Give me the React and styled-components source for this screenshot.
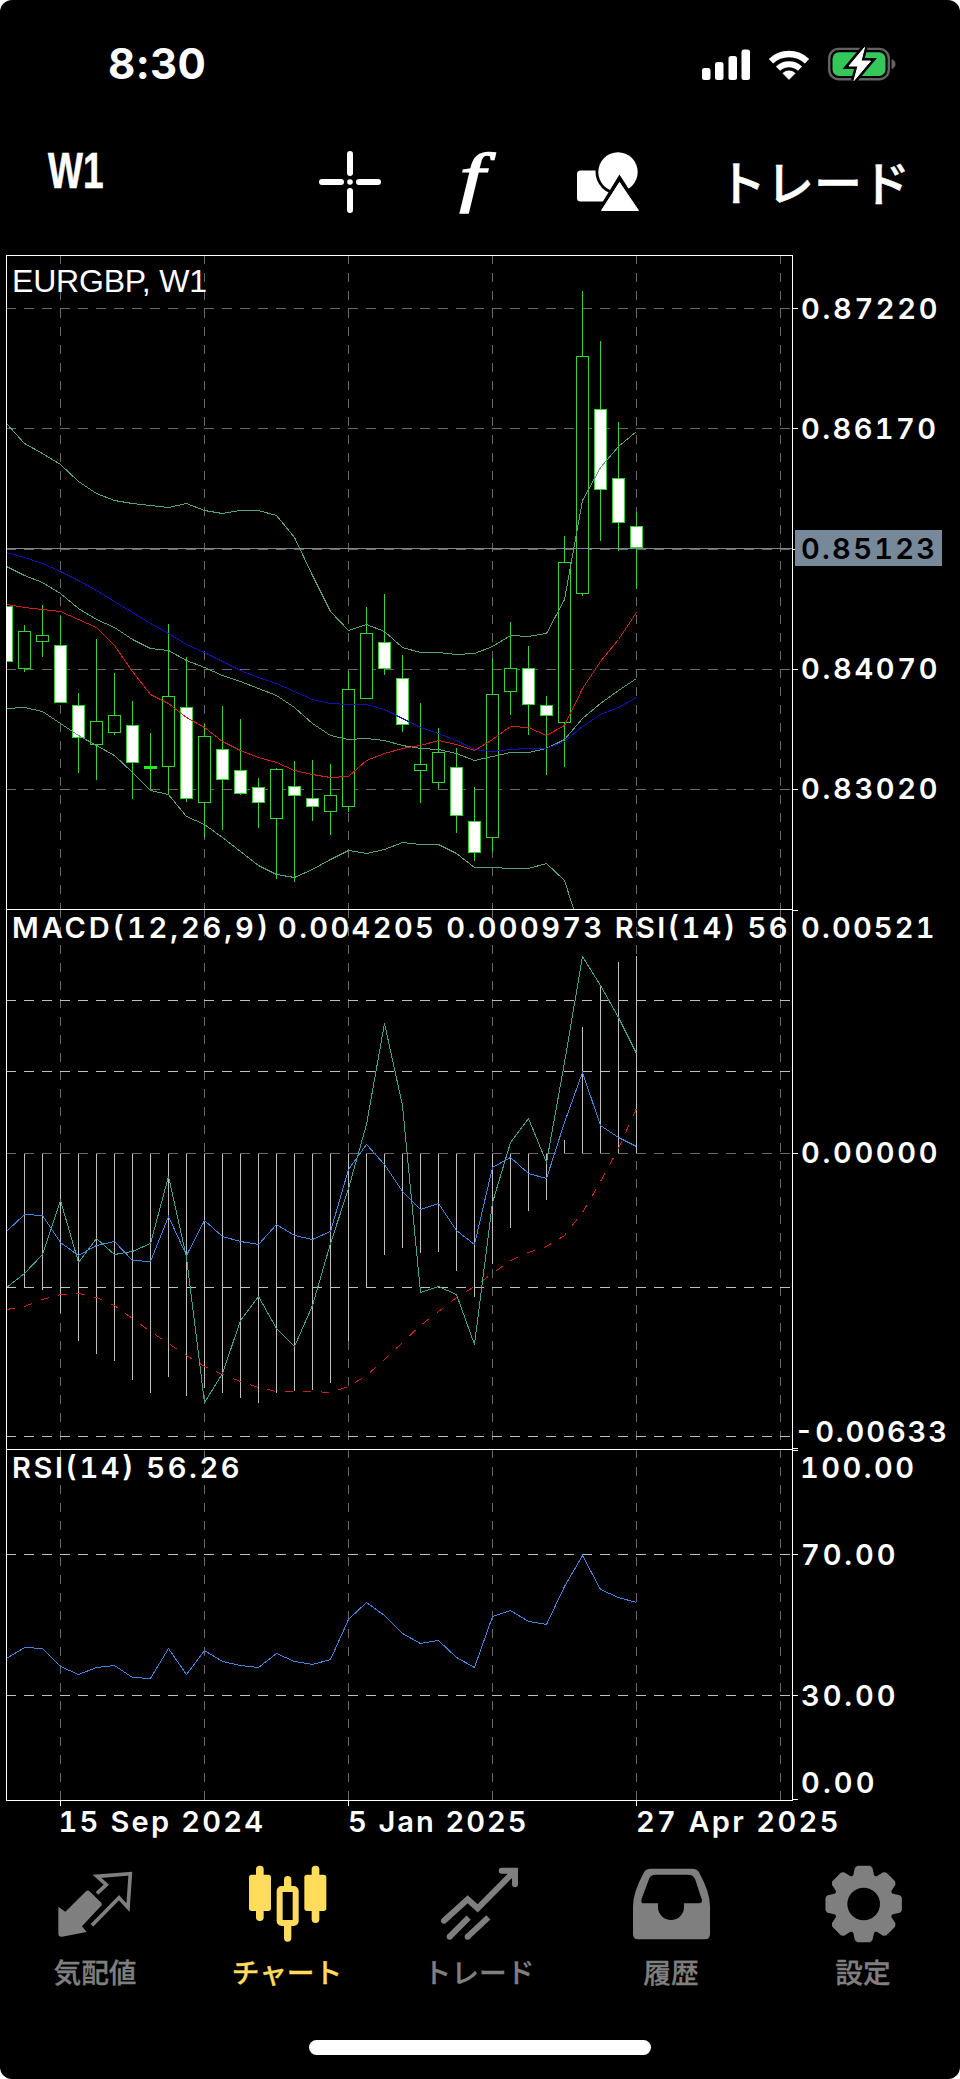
// Components==============
import React from "react";
import styled, { createGlobalStyle } from "styled-components";
// =========================

const GlobalStyle = createGlobalStyle`
   body {
      margin: 0;
      background: #fff;
   }
`;

const Screen = styled.main`
   display: flex;
   flex-direction: column;
   width: 960px;
   height: 2079px;
   overflow: hidden;
   border-radius: 12px;
   background: #000;
   color: #fff;
   font-family: Inter, "Noto Sans CJK JP", sans-serif;
`;

const StatusBar = styled.header`
   display: flex;
   align-items: center;
   justify-content: space-between;
   box-sizing: border-box;
   height: 110px;
   padding: 18px 64px 0 108px;
`;

const Clock = styled.span`
   font-size: 42px;
   font-weight: 700;
   line-height: 50px;
   letter-spacing: 0.3px;
`;

const StatusIcons = styled.div`
   display: flex;
   align-items: center;
   gap: 18px;

   svg {
      display: block;
   }
`;

const Toolbar = styled.nav`
   display: flex;
   box-sizing: border-box;
   height: 145px;
   padding: 35px 0 0 48px;
`;

const Timeframe = styled.div`
   width: 266px;
   font-family: "Liberation Sans", sans-serif;
   font-size: 50px;
   font-weight: 700;
   line-height: 52px;
   -webkit-text-stroke: 0.6px #fff;

   span {
      display: inline-block;
      transform: scaleX(0.74);
      transform-origin: left;
   }
`;

const Tool = styled.div`
   display: flex;
   align-items: center;
   justify-content: center;
   width: ${props => props.$width}px;
   height: 74px;
`;

const FunctionSign = styled.span`
   padding: 0 10px 10px 0;
   font-family: "Liberation Serif", serif;
   font-size: 65px;
   font-style: italic;
   line-height: 74px;
   transform: scaleX(1.4);
   -webkit-text-stroke: 1.4px #fff;
`;

const TradeLink = styled.div`
   padding: 0 0 0 74px;
   font-family: "Noto Sans CJK JP", sans-serif;
   font-size: 48px;
   font-weight: 500;
   line-height: 71px;
   white-space: nowrap;
   -webkit-text-stroke: 0.6px #fff;
`;

const Chart = styled.section`
   display: flex;
   flex-direction: column;

   svg {
      display: block;
   }
`;

const Label = styled.text`
   fill: ${props => props.$color || "#fff"};
   font-family: Inter, sans-serif;
   font-size: 29px;
   font-variant-numeric: tabular-nums;
   font-weight: 560;
   white-space: pre;
`;

const SymbolLabel = styled(Label)`
   font-family: "Liberation Sans", sans-serif;
   font-size: 32px;
   font-weight: 400;
`;

const TabBar = styled.nav`
   display: flex;
   height: 177px;
   padding-top: 19px;
`;

const Tab = styled.div`
   display: flex;
   flex: 1;
   flex-direction: column;
   align-items: center;
   color: ${props => (props.$active ? "#ffdc5c" : "#7f7f7f")};

   svg {
      display: block;
      margin-bottom: 8px;
   }
`;

const TabLabel = styled.span`
   padding-right: 2px;
   font-family: "Noto Sans CJK JP", sans-serif;
   font-size: 27.7px;
   font-weight: 500;
   line-height: 40px;
   white-space: nowrap;
   -webkit-text-stroke: 0.3px currentColor;
`;

const HomeIndicator = styled.div`
   width: 342px;
   height: 15px;
   margin: 0 auto;
   border-radius: 8px;
   background: #fff;
`;

// Chart data ==============
const STEP = 18;
const LEFT = 6;
const GRID_X = [60, 204, 348, 492, 636, 780];

// high, body top, body bottom, low, filled
const candles = [
   [606, 606, 661, 661, 1],
   [625, 631, 668, 672, 0],
   [605, 635, 641, 657, 0],
   [616, 645, 702, 702, 1],
   [693, 705, 737, 773, 1],
   [639, 721, 744, 780, 0],
   [673, 715, 732, 735, 0],
   [701, 725, 762, 799, 1],
   [733, 766, 768, 789, 2],
   [624, 696, 766, 795, 0],
   [657, 707, 798, 802, 1],
   [724, 736, 802, 838, 0],
   [706, 749, 779, 830, 1],
   [719, 770, 793, 795, 1],
   [778, 787, 802, 828, 1],
   [768, 769, 818, 879, 0],
   [761, 786, 795, 882, 1],
   [760, 798, 806, 821, 1],
   [764, 795, 811, 835, 0],
   [671, 689, 806, 812, 0],
   [607, 633, 698, 698, 0],
   [594, 642, 668, 675, 1],
   [655, 678, 724, 732, 1],
   [703, 764, 770, 803, 0],
   [728, 752, 782, 789, 0],
   [748, 767, 815, 833, 1],
   [787, 821, 852, 861, 1],
   [658, 694, 837, 852, 0],
   [622, 668, 691, 715, 0],
   [646, 668, 704, 735, 1],
   [696, 705, 715, 775, 1],
   [536, 562, 722, 767, 0],
   [291, 356, 593, 596, 0],
   [341, 409, 489, 541, 1],
   [422, 478, 522, 551, 1],
   [512, 526, 547, 589, 1]
];

const upperBand = [
   423, 443, 453, 464, 481, 493, 500, 503, 505, 507, 503, 510, 513, 510, 510,
   515, 537, 575, 611, 630, 624, 631, 647, 652, 652, 654, 653, 646, 635, 636,
   633, 599, 500, 467, 446, 431
];
const middleBand = [
   566, 575, 582, 593, 608, 619, 627, 639, 648, 650, 660, 667, 675, 681, 688,
   695, 707, 723, 735, 739, 738, 740, 745, 748, 749, 753, 760, 756, 752, 752,
   748, 739, 718, 703, 690, 678
];
const lowerBand = [
   708, 707, 711, 723, 735, 745, 755, 772, 790, 794, 816, 824, 837, 851, 865,
   874, 877, 869, 859, 850, 853, 849, 842, 844, 844, 853, 867, 867, 868, 868,
   863, 880, 936
];
const fastAverage = [
   604, 607, 609, 611, 619, 627, 645, 671, 694, 703, 717, 727, 741, 750, 757,
   762, 770, 774, 777, 776, 760, 753, 748, 745, 740, 744, 750, 739, 726, 727,
   735, 725, 688, 661, 639, 612
];
const slowAverage = [
   552, 557, 563, 571, 580, 590, 601, 612, 623, 633, 644, 652, 661, 670, 677,
   683, 691, 699, 703, 704, 704, 709, 718, 727, 733, 740, 749, 751, 749, 748,
   748, 741, 726, 714, 707, 697
];

const ZERO = 1153;
const histogram = [
   1287, 1287, 1290, 1313, 1341, 1354, 1361, 1380, 1393, 1377, 1396, 1388,
   1393, 1398, 1403, 1393, 1391, 1390, 1383, 1341, 1287, 1255, 1248, 1253,
   1252, 1271, 1297, 1264, 1228, 1211, 1200, 1140, 1027, 985, 962, 956
];
const momentum = [
   1287, 1273, 1254, 1200, 1262, 1238, 1254, 1251, 1243, 1176, 1257, 1402,
   1373, 1320, 1296, 1328, 1346, 1305, 1243, 1188, 1124, 1023, 1105, 1292,
   1286, 1294, 1344, 1202, 1142, 1118, 1162, 1062, 956, 985, 1017, 1053
];
const macdRsi = [
   1231, 1214, 1215, 1242, 1255, 1245, 1241, 1260, 1261, 1216, 1255, 1220,
   1236, 1241, 1244, 1224, 1235, 1239, 1231, 1169, 1144, 1164, 1191, 1209,
   1203, 1230, 1244, 1167, 1157, 1173, 1178, 1122, 1072, 1125, 1137, 1146
];
const signal = [
   1309, 1306, 1299, 1294, 1293, 1297, 1305, 1318, 1331, 1343, 1355, 1366,
   1374, 1381, 1387, 1391, 1391, 1391, 1392, 1386, 1375, 1359, 1342, 1325,
   1311, 1297, 1286, 1273, 1260, 1252, 1246, 1235, 1212, 1181, 1148, 1108
];
const rsi = [
   1658, 1647, 1648, 1666, 1674, 1667, 1665, 1677, 1678, 1648, 1674, 1650,
   1661, 1665, 1667, 1653, 1661, 1664, 1659, 1619, 1602, 1615, 1633, 1643,
   1640, 1657, 1667, 1616, 1610, 1621, 1624, 1586, 1555, 1589, 1597, 1602
];

const barX = i => LEFT + i * STEP + 0.5;

const toPoints = values =>
   values.map((y, i) => `${barX(i)},${y + 0.5}`).join(" ");

function Line({ values, color, dash }) {
   return (
      <polyline
         points={toPoints(values)}
         fill="none"
         stroke={color}
         strokeDasharray={dash}
      />
   );
}

function Pane({ id, top, height, grid, children, ticks, overlay }) {
   const bottom = top + height;
   return (
      <svg
         width="960"
         height={height}
         viewBox={`0 ${top} 960 ${height}`}
         shapeRendering="crispEdges"
      >
         <clipPath id={id}>
            <rect x="7" y={top + 1} width="785" height={height - 1} />
         </clipPath>
         <g clipPath={`url(#${id})`}>
            {GRID_X.map(x => (
               <line
                  key={x}
                  x1={x + 0.5}
                  x2={x + 0.5}
                  y1={top}
                  y2={bottom}
                  stroke="#696969"
                  strokeDasharray="9 9"
               />
            ))}
            {grid.map(([y, color]) => (
               <line
                  key={y}
                  x1={LEFT}
                  x2="791"
                  y1={y + 0.5}
                  y2={y + 0.5}
                  stroke={color}
                  strokeDasharray="9.5 8.5"
               />
            ))}
            {children}
         </g>
         <path
            d={`M792.5 ${bottom}V${top + 0.5}H6.5V${bottom}`}
            fill="none"
            stroke="#fff"
         />
         {ticks.map(y => (
            <line
               key={y}
               x1="793"
               x2="798"
               y1={y + 0.5}
               y2={y + 0.5}
               stroke="#fff"
            />
         ))}
         {overlay}
      </svg>
   );
}

function Candle({ index, high, top, bottom, low, kind }) {
   const x = barX(index);
   if (kind === 2) {
      return (
         <g>
            <line x1={x} x2={x} y1={high} y2={low} stroke="#35d335" />
            <rect x={x - 6.5} y={top} width="13" height="3" fill="#1ff01f" />
         </g>
      );
   }
   return (
      <g stroke="#35d335">
         <line x1={x} x2={x} y1={high} y2={top} />
         <line x1={x} x2={x} y1={bottom} y2={low} />
         <rect
            x={x - 6}
            y={top + 0.5}
            width="12"
            height={bottom - top}
            fill={kind ? "#fff" : "#000"}
         />
      </g>
   );
}

function PricePane() {
   const grid = [308, 428, 549, 669, 789];
   return (
      <Pane
         id="price"
         top={255}
         height={654}
         grid={grid.map(y => [y, "#696969"])}
         ticks={grid}
         overlay={
            <>
               <rect x="795" y="530" width="147" height="36" fill="#778899" />
               <SymbolLabel x="12" y="292" textLength="195">
                  EURGBP, W1
               </SymbolLabel>
               <Label x="801" y="319" textLength="136.5">0.87220</Label>
               <Label x="801" y="439" textLength="135">0.86170</Label>
               <Label x="801" y="559" textLength="134" $color="#000">
                  0.85123
               </Label>
               <Label x="801" y="679" textLength="136.5">0.84070</Label>
               <Label x="801" y="799" textLength="136.5">0.83020</Label>
            </>
         }
      >
         {candles.map(([high, top, bottom, low, kind], i) => (
            <Candle
               key={i}
               index={i}
               high={high}
               top={top}
               bottom={bottom}
               low={low}
               kind={kind}
            />
         ))}
         <line x1="7" x2="792" y1="548.5" y2="548.5" stroke="#778899" />
         <Line values={upperBand} color="#56a07a" />
         <Line values={middleBand} color="#56a07a" />
         <Line values={lowerBand} color="#56a07a" />
         <Line values={slowAverage} color="#1010b4" />
         <Line values={fastAverage} color="#cf2020" />
      </Pane>
   );
}

function MacdPane() {
   return (
      <Pane
         id="macd"
         top={909}
         height={540}
         grid={[
            [1000, "#c0c0c0"],
            [1071, "#c0c0c0"],
            [1153, "#696969"],
            [1287, "#c0c0c0"],
            [1436, "#c0c0c0"]
         ]}
         ticks={[910, 1153, 1448]}
         overlay={
            <>
               <Label x="12" y="938" textLength="256">
                  MACD(12,26,9)
               </Label>
               <Label x="278" y="938" textLength="509.5">
                  0.004205 0.000973 RSI(14) 56
               </Label>
               <Label x="801" y="938" textLength="133.5">0.00521</Label>
               <Label x="801" y="1163" textLength="136.5">0.00000</Label>
               <Label x="794.5" y="1442" textLength="152.5">-0.00633</Label>
            </>
         }
      >
         {histogram.map((y, i) => (
            <line
               key={i}
               x1={barX(i)}
               x2={barX(i)}
               y1={y < ZERO ? ZERO : ZERO + 1}
               y2={y}
               stroke="#c0c0c0"
            />
         ))}
         <Line values={signal} color="#cf2020" dash="8.5 9.5" />
         <Line values={macdRsi} color="#4583dc" />
         <Line values={momentum} color="#3fa295" />
      </Pane>
   );
}

function RsiPane() {
   return (
      <Pane
         id="rsi"
         top={1449}
         height={351}
         grid={[
            [1554, "#c0c0c0"],
            [1695, "#c0c0c0"]
         ]}
         ticks={[1450, 1554, 1695, 1799]}
         overlay={
            <>
               <Label x="12" y="1478" textLength="227.5">RSI(14) 56.26</Label>
               <Label x="800" y="1478" textLength="114">100.00</Label>
               <Label x="801" y="1565" textLength="94.5">70.00</Label>
               <Label x="801" y="1706" textLength="94.5">30.00</Label>
               <Label x="801" y="1793" textLength="73.5">0.00</Label>
            </>
         }
      >
         <Line values={rsi} color="#4583dc" />
      </Pane>
   );
}

function TimeAxis() {
   return (
      <svg
         width="960"
         height="44"
         viewBox="0 1800 960 44"
         shapeRendering="crispEdges"
      >
         <path
            d="M6 1800.5H793M60.5 1800V1806M348.5 1800V1806M636.5 1800V1806"
            stroke="#fff"
         />
         <Label x="58.5" y="1832" textLength="204.5">15 Sep 2024</Label>
         <Label x="348" y="1832" textLength="178.5">5 Jan 2025</Label>
         <Label x="636" y="1832" textLength="202.5">27 Apr 2025</Label>
      </svg>
   );
}

// Status icons ============
function SignalIcon() {
   return (
      <svg width="48" height="31" viewBox="702 48 48 31" fill="#fff">
         <rect x="702" y="67" width="8.5" height="12" rx="2.5" />
         <rect x="715" y="61" width="8.5" height="18" rx="2.5" />
         <rect x="728.5" y="55" width="8.5" height="24" rx="2.5" />
         <rect x="741.5" y="48.5" width="8.5" height="30.5" rx="2.5" />
      </svg>
   );
}

function WifiIcon() {
   return (
      <svg width="42" height="31" viewBox="0 0 42 31" fill="none">
         <path d="M3 12.3A26 26 0 0 1 39 12.3" stroke="#fff" strokeWidth="6.4" />
         <path d="M10 19.6A16 16 0 0 1 32 19.6" stroke="#fff" strokeWidth="6" />
         <path
            d="M21 30.5L14.8 24.3A9 9 0 0 1 27.2 24.3Z"
            fill="#fff"
            stroke="#fff"
            strokeWidth="0.6"
         />
      </svg>
   );
}

function BatteryIcon() {
   const bolt = "M864.5 47L849 65.5H858L854 80L870.5 60.5H861Z";
   return (
      <svg width="68" height="34" viewBox="828 46.5 68 34">
         <rect
            x="829.2"
            y="48.4"
            width="59.6"
            height="30.4"
            rx="9.5"
            fill="none"
            stroke="#626262"
            strokeWidth="2.4"
         />
         <path d="M891.5 58.5Q895.5 60 895.5 63.6T891.5 68.8Z" fill="#626262" />
         <rect x="832.5" y="51.8" width="53" height="23.6" rx="6.5" fill="#34c759" />
         <path d={bolt} fill="#000" stroke="#000" strokeWidth="6" />
         <path
            d={bolt}
            fill="#fff"
            stroke="#fff"
            strokeWidth="1"
            strokeLinejoin="round"
         />
      </svg>
   );
}

// Toolbar icons ===========
function CrosshairIcon() {
   return (
      <svg width="62" height="62" viewBox="0 0 62 62">
         <path
            d="M31 3V22M31 40V59M3 31H22M40 31H59"
            stroke="#fff"
            strokeWidth="6"
            strokeLinecap="round"
         />
         <circle cx="31" cy="31" r="2.8" fill="#fff" />
      </svg>
   );
}

function ShapesIcon() {
   return (
      <svg width="64" height="62" viewBox="576 151 64 62">
         <rect x="577" y="170.5" width="40" height="31" rx="3.5" fill="#fff" />
         <circle cx="618" cy="172" r="22.5" fill="#000" />
         <circle cx="618" cy="172" r="19.7" fill="#fff" />
         <path
            d="M619.5 181L601.5 210.5H638.5Z"
            fill="#000"
            stroke="#000"
            strokeWidth="7"
         />
         <path
            d="M619.5 182.5L601.5 210.5H638.5Z"
            fill="#fff"
            stroke="#fff"
            strokeLinejoin="round"
         />
      </svg>
   );
}

// Tab icons ===============
function QuotesIcon() {
   return (
      <svg width="80" height="80" viewBox="168 70 240 240">
         <path
            d="M175 201L196 216L258 155Q264 150 270 156L304 189Q308 194 303 199L246 260L260 277L186 291Q175 292 175 282Z"
            fill="currentColor"
         />
         <path
            d="M291 161L319 135L291 110L391 102L384 204L357 174L276 257"
            fill="none"
            stroke="currentColor"
            strokeWidth="11"
         />
      </svg>
   );
}

function ChartIcon() {
   return (
      <svg width="80" height="80" viewBox="744 70 240 240" fill="currentColor">
         <rect x="747" y="105" width="66" height="109" rx="8" />
         <rect x="768" y="78" width="23" height="166" rx="11" />
         <rect x="913" y="105" width="66" height="109" rx="8" />
         <rect x="935" y="78" width="23" height="172" rx="11" />
         <rect x="852" y="109" width="22" height="50" rx="11" />
         <rect x="852" y="245" width="22" height="61" rx="11" />
         <rect
            x="839"
            y="148"
            width="48"
            height="102"
            rx="6"
            fill="#000"
            stroke="currentColor"
            strokeWidth="18"
         />
      </svg>
   );
}

function TradeIcon() {
   return (
      <svg
         width="80"
         height="80"
         viewBox="1320 70 240 240"
         fill="none"
         stroke="currentColor"
         strokeWidth="18"
      >
         <path
            d="M1332 243L1403 179L1433 206L1543 95M1505 93H1545V134"
            strokeLinecap="round"
         />
         <path d="M1349 291L1406 234M1403 291L1465 233" />
         <g fill="currentColor" stroke="none">
            <circle cx="1349" cy="291" r="9" />
            <circle cx="1403" cy="291" r="9" />
         </g>
      </svg>
   );
}

function HistoryIcon() {
   return (
      <svg width="80" height="80" viewBox="456 70 240 240">
         <path
            d="M459 200Q459 158 492 98Q498 87 512 87H637Q651 87 657 98Q690 158 690 200V284Q690 299 675 299H474Q459 299 459 284ZM526 105Q513 105 508 116L485 177Q480 191 493 191H534V202A39 39 0 0 0 612 202V191H656Q669 191 665 178L645 118Q640 105 624 105Z"
            fill="currentColor"
            fillRule="evenodd"
         />
      </svg>
   );
}

function SettingsIcon() {
   const profile = [
      [-22.5, 86],
      [-18, 89],
      [-12, 109],
      [-9, 112],
      [9, 112],
      [12, 109],
      [18, 89]
   ];
   const outline = [];
   for (let tooth = 0; tooth < 8; tooth++) {
      profile.forEach(([angle, radius]) => {
         const a = ((tooth * 45 + angle) * Math.PI) / 180;
         outline.push(
            `${(119 + radius * Math.sin(a)).toFixed(1)},${(
               123 -
               radius * Math.cos(a)
            ).toFixed(1)}`
         );
      });
   }
   return (
      <svg width="80" height="80" viewBox="0 0 240 240">
         <polygon
            points={outline.join(" ")}
            fill="currentColor"
            stroke="currentColor"
            strokeWidth="8"
            strokeLinejoin="round"
         />
         <circle cx="119" cy="123" r="49" fill="#000" />
      </svg>
   );
}

const tabs = [
   { label: "気配値", Icon: QuotesIcon },
   { label: "チャート", Icon: ChartIcon, active: true },
   { label: "トレード", Icon: TradeIcon },
   { label: "履歴", Icon: HistoryIcon },
   { label: "設定", Icon: SettingsIcon }
];

export default function App() {
   return (
      <>
         <GlobalStyle />
         <Screen>
            <StatusBar>
               <Clock>8:30</Clock>
               <StatusIcons>
                  <SignalIcon />
                  <WifiIcon />
                  <BatteryIcon />
               </StatusIcons>
            </StatusBar>
            <Toolbar>
               <Timeframe>
                  <span>W1</span>
               </Timeframe>
               <Tool $width={72}>
                  <CrosshairIcon />
               </Tool>
               <Tool $width={186}>
                  <FunctionSign>f</FunctionSign>
               </Tool>
               <Tool $width={72}>
                  <ShapesIcon />
               </Tool>
               <TradeLink>トレード</TradeLink>
            </Toolbar>
            <Chart>
               <PricePane />
               <MacdPane />
               <RsiPane />
               <TimeAxis />
            </Chart>
            <TabBar>
               {tabs.map(({ label, Icon, active }) => (
                  <Tab key={label} $active={active}>
                     <Icon />
                     <TabLabel>{label}</TabLabel>
                  </Tab>
               ))}
            </TabBar>
            <HomeIndicator />
         </Screen>
      </>
   );
}
